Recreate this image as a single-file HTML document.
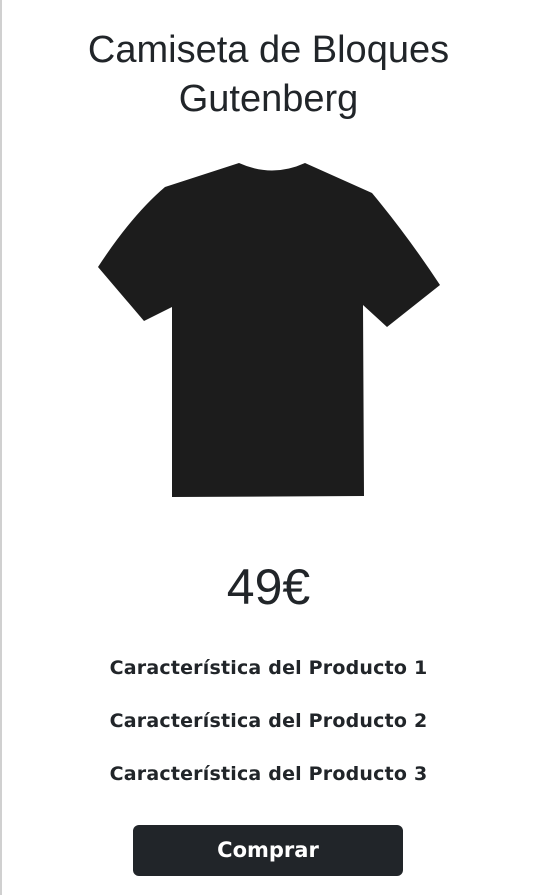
<!DOCTYPE html>
<html><head><meta charset="utf-8"><style>
body{margin:0;width:533px;height:895px;background:#fff;border-left:2px solid #d0d0d0;box-sizing:border-box;font-family:"DejaVu Sans","Liberation Sans",sans-serif;color:#212529;position:relative;overflow:hidden}
h1{position:absolute;top:26px;left:0;width:533px;text-align:center;margin:0;font-weight:400;font-size:38px;line-height:49px;font-family:"Liberation Sans",sans-serif}
.price{position:absolute;top:557px;left:0;width:533px;text-align:center;font-size:50px;line-height:60px;font-family:"Liberation Sans",sans-serif}
.f{position:absolute;left:0;width:533px;text-align:center;font-weight:700;font-size:19px;letter-spacing:0.2px}
.btn{position:absolute;left:131px;top:825px;width:270px;height:51px;background:#212529;border-radius:6px;color:#fff;font-weight:700;font-size:21px;line-height:51px;text-align:center}
</style></head><body>
<h1>Camiseta de Bloques<br>Gutenberg</h1>
<svg style="position:absolute;left:0;top:0" width="533" height="520">
<path d="M237,163 Q270,178 303,163 L370,193 Q405,235 438,285 L385,327 L361,305 L362,496 L170,497 L170,307 L142,321 L96,267 Q130,215 163,187 Z" fill="#1c1c1c"/>
</svg>
<div class="price">49€</div>
<div class="f" style="top:657px">Característica del Producto 1</div>
<div class="f" style="top:710px">Característica del Producto 2</div>
<div class="f" style="top:763px">Característica del Producto 3</div>
<div class="btn">Comprar</div>
</body></html>
